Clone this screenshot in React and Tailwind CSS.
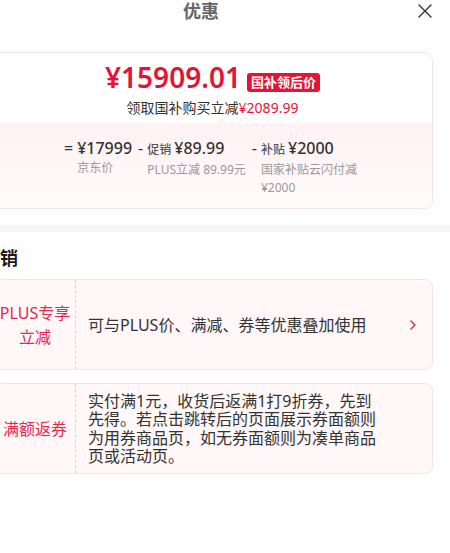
export default function App() {
  return (
    <div className="w-[450px] h-[553px] overflow-hidden bg-white font-['Noto_Sans','Noto_Sans_CJK_SC',sans-serif] text-[#333]">
      <div className="ml-[-20px] w-[470px]">
        <header className="flex items-center h-[22px]">
          <div className="flex-1" />
          <h1 className="pr-[10px] text-[18px] leading-[22px] font-bold text-[#666]">优惠</h1>
          <div className="flex-1 flex justify-end pr-[18px]">
            <svg width="14" height="14" viewBox="0 0 14 14" fill="none" stroke="#333" strokeWidth="1.4" strokeLinecap="round">
              <path d="M1 1L13 13M13 1L1 13" />
            </svg>
          </div>
        </header>

        <div className="mt-[30px] ml-[12px] mr-[17px] border border-[#f2e6e8] rounded-[8px] overflow-hidden">
          <div className="flex flex-col items-center pt-[6px] pb-[5px]">
            <div className="flex items-center">
              <span className="text-[28px] leading-[36px] font-semibold text-[#e31436]">¥15909.01</span>
              <span className="ml-[6px] mt-[10px] px-[4px] h-[19px] text-[13px] leading-[19px] font-bold text-white bg-[#e31436] rounded-[3px]">国补领后价</span>
            </div>
            <div className="mt-[3px] text-[14px] leading-[20px] text-[#333]">
              领取国补购买立减<span className="text-[#e31436]">¥2089.99</span>
            </div>
          </div>
          <div className="relative bg-linear-to-b from-[#fff2f4] to-[#fffafb] pt-[14px] pb-[11px] flex justify-center gap-[6px]">
            <div className="absolute top-[-5px] left-[calc(50%+3px)] w-0 h-0 border-l-[5px] border-r-[5px] border-b-[5px] border-l-transparent border-r-transparent border-b-[#fff2f4]" />
            <div className="flex items-start">
              <span className="mr-[4px] text-[16px] leading-[22px]">=</span>
              <div className="flex flex-col">
                <span className="text-[16px] leading-[22px] font-medium text-[#333]">¥17999</span>
                <span className="text-[12px] leading-[18px] text-[#999]">京东价</span>
              </div>
            </div>
            <div className="flex items-start">
              <span className="mr-[4px] text-[16px] leading-[22px]">-</span>
              <div className="flex flex-col">
                <div className="flex items-baseline gap-[3px]">
                  <span className="text-[12px] leading-[22px]">促销</span>
                  <span className="text-[16px] leading-[22px] font-medium">¥89.99</span>
                </div>
                <span className="text-[12px] leading-[18px] text-[#999]">PLUS立减 89.99元</span>
              </div>
            </div>
            <div className="flex items-start">
              <span className="mr-[4px] text-[16px] leading-[22px]">-</span>
              <div className="flex flex-col w-[100px]">
                <div className="flex items-baseline gap-[3px]">
                  <span className="text-[12px] leading-[22px]">补贴</span>
                  <span className="text-[16px] leading-[22px] font-medium">¥2000</span>
                </div>
                <span className="text-[12px] leading-[18px] text-[#999]">国家补贴云闪付减¥2000</span>
              </div>
            </div>
          </div>
        </div>

        <div className="mt-[16px] h-[7px] bg-[#f5f6f9]" />

        <h2 className="mt-[13px] pl-[2px] text-[18px] leading-[26px] font-bold text-[#1a1a1a]">促销</h2>

        <div className="mt-[8px] ml-[14px] mr-[17px] flex min-h-[91px] border border-[#f2e3e6] rounded-[8px] bg-[#fff7f8]">
          <div className="w-[81px] shrink-0 flex items-center justify-center text-center text-[16px] leading-[24px] text-[#e2294f] border-r border-dashed border-[#efc6cf]">
            <span>PLUS专享<br />立减</span>
          </div>
          <div className="flex flex-1 items-center pl-[12px]">
            <p className="w-[292px] text-[16px] leading-[24px] text-[#333]">可与PLUS价、满减、券等优惠叠加使用</p>
            <svg className="ml-auto mr-[15px]" width="8" height="12" viewBox="0 0 8 12" fill="none" stroke="#c2384f" strokeWidth="1.5" strokeLinecap="round" strokeLinejoin="round">
              <path d="M2 2L6 6L2 10" />
            </svg>
          </div>
        </div>

        <div className="mt-[13px] ml-[14px] mr-[17px] flex min-h-[91px] border border-[#f2e3e6] rounded-[8px] bg-[#fff7f8]">
          <div className="w-[81px] shrink-0 flex items-center justify-center text-center text-[16px] leading-[24px] text-[#e2294f] border-r border-dashed border-[#efc6cf]">
            <span>满额返券</span>
          </div>
          <div className="flex flex-1 items-center pl-[12px]">
            <p className="w-[292px] text-[16px] leading-[18.5px] text-[#333]">实付满1元，收货后返满1打9折券，先到先得。若点击跳转后的页面展示券面额则为用券商品页，如无券面额则为凑单商品页或活动页。</p>
          </div>
        </div>
      </div>
    </div>
  );
}
